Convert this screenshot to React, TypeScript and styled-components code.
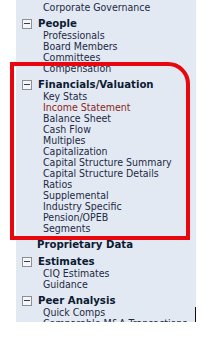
import styled, { createGlobalStyle } from "styled-components";

const GlobalStyle = createGlobalStyle`
  html, body {
    margin: 0;
    padding: 0;
    background: #ffffff;
  }
`;

const Page = styled.div`
  position: relative;
  width: 223px;
  height: 352px;
  overflow: hidden;
  background: #ffffff;
`;

const Panel = styled.div`
  position: relative;
  margin-left: 16px;
  width: 180px;
  height: 322px;
  overflow: hidden;
  background: #e3e9f2;
  font-family: "DejaVu Sans Condensed", "DejaVu Sans", Verdana, sans-serif;
`;

const Tree = styled.div`
  padding-top: 2px;
  padding-left: 6px;
`;

const Section = styled.div`
  margin-top: 4px;
`;

const Header = styled.div<{ $noToggle?: boolean }>`
  display: flex;
  align-items: center;
  height: 13px;
  padding-left: ${(p) => (p.$noToggle ? 15 : 0)}px;
  font-size: 11.3px;
  font-weight: bold;
  color: #0c1a33;
  white-space: nowrap;
`;

const Toggle = styled.span`
  position: relative;
  box-sizing: border-box;
  width: 10px;
  height: 10px;
  margin-right: 6px;
  border: 1px solid #8c8f94;
  background: #f4f6f9;
  flex-shrink: 0;

  &::after {
    content: "";
    position: absolute;
    left: 1px;
    right: 1px;
    top: 3.5px;
    height: 1px;
    background: #3a3d42;
  }
`;

const Item = styled.div<{ $active?: boolean }>`
  height: 11px;
  line-height: 11px;
  padding-left: 21px;
  font-size: 10.5px;
  color: ${(p) => (p.$active ? "#8a1f1f" : "#1d2a45")};
  white-space: nowrap;
`;

const ScrollEdge = styled.div`
  position: absolute;
  right: 0;
  bottom: 0;
  width: 1px;
  height: 15px;
  background: #111111;
`;

const Annotation = styled.div`
  position: absolute;
  left: 10px;
  top: 62px;
  width: 180px;
  height: 178px;
  box-sizing: border-box;
  border: 4px solid #e8070d;
  border-top-right-radius: 22px;
  pointer-events: none;
`;

type SectionData = {
  title: string;
  toggle: boolean;
  items: string[];
  active?: string;
};

const sections: SectionData[] = [
  { title: "People", toggle: true, items: ["Professionals", "Board Members", "Committees", "Compensation"] },
  {
    title: "Financials/Valuation",
    toggle: true,
    active: "Income Statement",
    items: [
      "Key Stats",
      "Income Statement",
      "Balance Sheet",
      "Cash Flow",
      "Multiples",
      "Capitalization",
      "Capital Structure Summary",
      "Capital Structure Details",
      "Ratios",
      "Supplemental",
      "Industry Specific",
      "Pension/OPEB",
      "Segments",
    ],
  },
  { title: "Proprietary Data", toggle: false, items: [] },
  { title: "Estimates", toggle: true, items: ["CIQ Estimates", "Guidance"] },
  { title: "Peer Analysis", toggle: true, items: ["Quick Comps", "Comparable M&A Transactions"] },
];

export default function App() {
  return (
    <Page>
      <GlobalStyle />
      <Panel>
        <Tree>
          <Item>Corporate Governance</Item>
          {sections.map((s) => (
            <Section key={s.title}>
              <Header $noToggle={!s.toggle}>
                {s.toggle && <Toggle />}
                {s.title}
              </Header>
              {s.items.map((it) => (
                <Item key={it} $active={it === s.active}>
                  {it}
                </Item>
              ))}
            </Section>
          ))}
        </Tree>
        <ScrollEdge />
      </Panel>
      <Annotation />
    </Page>
  );
}
